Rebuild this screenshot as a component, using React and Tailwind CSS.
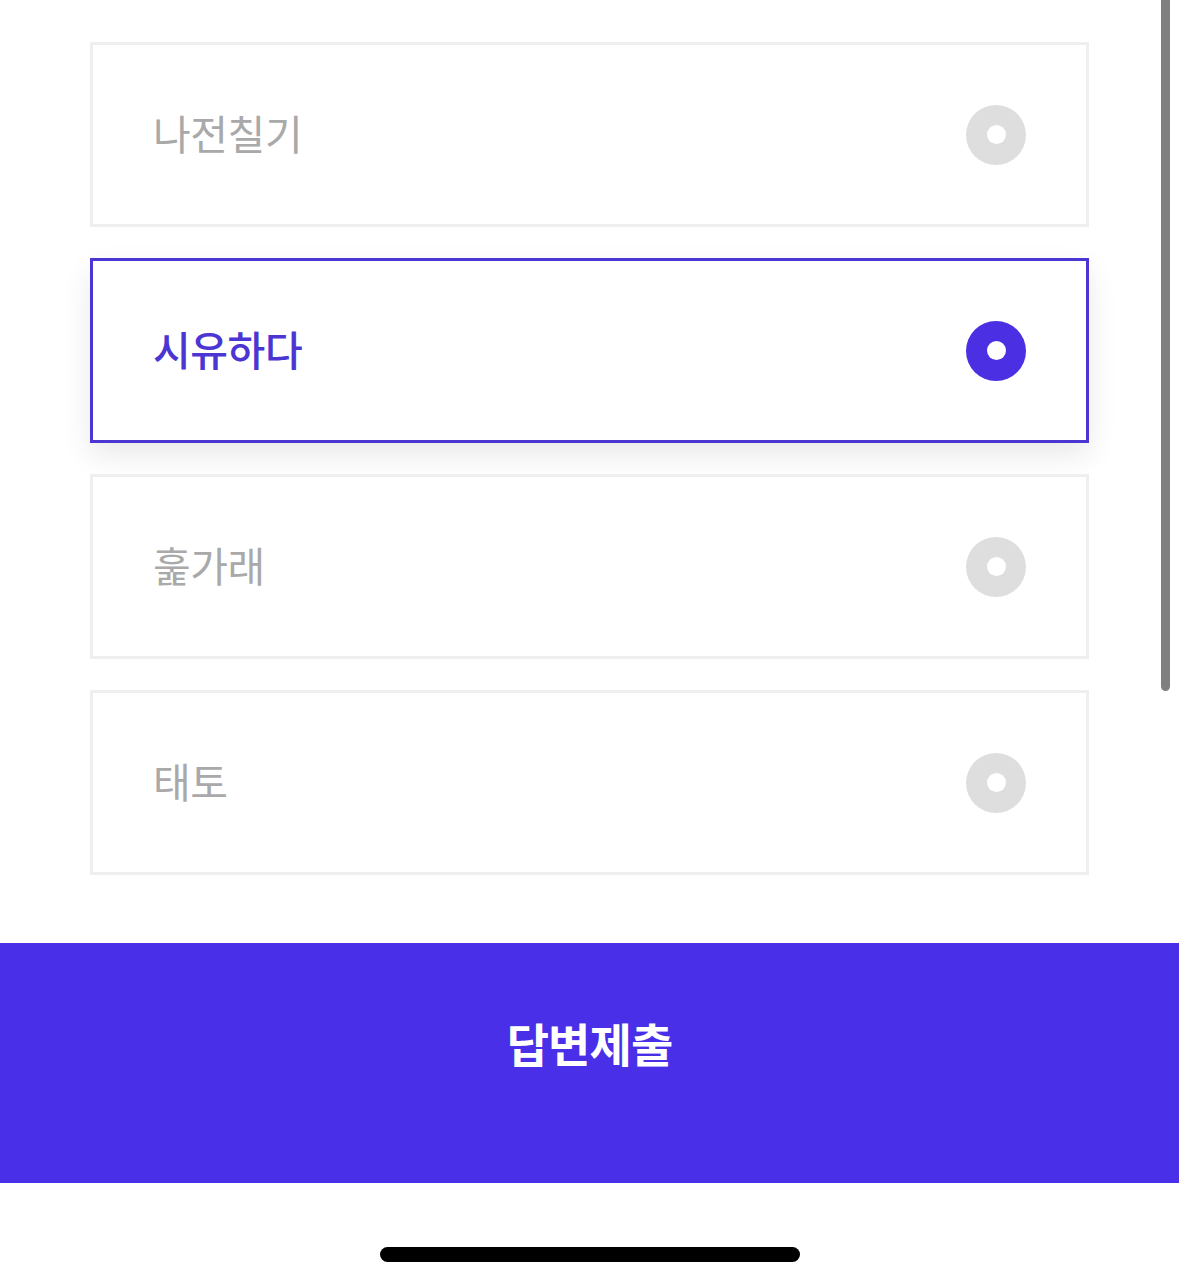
const options = [
  { label: "나전칠기", selected: false },
  { label: "시유하다", selected: true },
  { label: "훑가래", selected: false },
  { label: "태토", selected: false },
];

function OptionCard({ label, selected }) {
  return (
    <div
      className={
        selected
          ? "flex h-[185px] items-center justify-between border-[3px] border-[#4b35d3] bg-white pl-[60px] pr-[60px] shadow-[0_12px_28px_rgba(0,0,0,0.09)]"
          : "flex h-[185px] items-center justify-between border-[3px] border-[#efefef] bg-white pl-[60px] pr-[60px]"
      }
    >
      <span
        className={
          selected
            ? "-mt-[4px] text-[41px] leading-none font-medium tracking-[-0.01em] text-[#4b35d3]"
            : "-mt-[4px] text-[41px] leading-none font-normal tracking-[-0.01em] text-[#a9a9a9]"
        }
      >
        {label}
      </span>
      <span
        className={
          selected
            ? "flex h-[60px] w-[60px] items-center justify-center rounded-full bg-[#4a2fe3]"
            : "flex h-[60px] w-[60px] items-center justify-center rounded-full bg-[#dedede]"
        }
      >
        <span className="h-[19px] w-[19px] rounded-full bg-white" />
      </span>
    </div>
  );
}

export default function App() {
  return (
    <div
      className="relative h-[1285px] w-full overflow-hidden bg-white"
      style={{ fontFamily: '"Noto Sans CJK KR", "Noto Sans", sans-serif' }}
    >
      <div className="flex flex-col gap-[31px] px-[90px] pt-[42px]">
        {options.map((o) => (
          <OptionCard key={o.label} {...o} />
        ))}
      </div>

      <button className="mt-[68px] flex h-[240px] w-full justify-center bg-[#4a2fe8] pt-[76px]">
        <span className="text-[46px] leading-none font-bold tracking-[-0.02em] text-white">
          답변제출
        </span>
      </button>

      <div className="mt-[64px] flex justify-center">
        <div className="h-[15px] w-[420px] rounded-full bg-black" />
      </div>

      <div className="absolute top-0 right-[9px] h-[691px] w-[9px] rounded-b-full bg-[#808080]" />
    </div>
  );
}
